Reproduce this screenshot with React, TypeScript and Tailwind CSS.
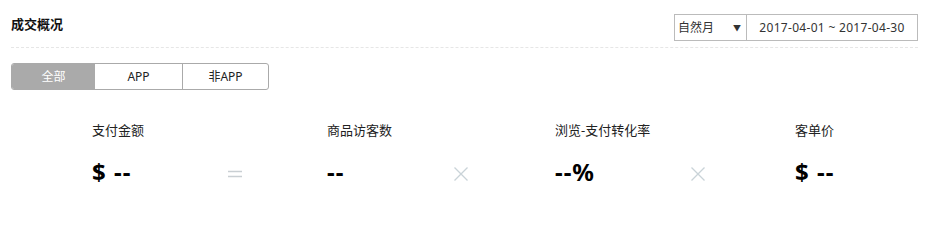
import React from 'react';

const tabs = ['全部', 'APP', '非APP'];

const metrics = [
    { label: '支付金额', value: '$ --', width: 'w-[136px]', op: '=', gap: 'mr-[85px]' },
    { label: '商品访客数', value: '--', width: 'w-[127px]', op: '×', gap: 'mr-[87px]' },
    { label: '浏览-支付转化率', value: '--%', width: 'w-[136px]', op: '×', gap: 'mr-[90px]' },
    { label: '客单价', value: '$ --', width: 'w-[120px]', op: '', gap: '' },
];

const Equals = () => (
    <svg width="14" height="14" viewBox="0 0 14 14" className="text-[#c9cfd3]">
        <path d="M0 4.5h14M0 9.5h14" stroke="currentColor" strokeWidth="1.6" />
    </svg>
);

const Times = () => (
    <svg width="14" height="14" viewBox="0 0 14 14" className="text-[#c9d3d8]">
        <path d="M0.5 0.5l13 13M13.5 0.5l-13 13" stroke="currentColor" strokeWidth="1.3" />
    </svg>
);

const App: React.FC = () => {
    return (
        <div className="w-[928px] h-[225px] bg-white pl-[11px] pr-[10px] text-[#333]" style={{ fontFamily: '"Noto Sans", "Noto Sans CJK SC", sans-serif' }}>
            {/* header */}
            <div className="flex justify-between items-start border-b border-dashed border-[#e6e6e6] pb-[6px]">
                <h2 className="mt-[14px] text-[13px] leading-[20px] font-bold text-[#111]">成交概况</h2>
                <div className="mt-[14px] flex h-[27px] border border-[#bbb] text-[12px]">
                    <div className="w-[72px] flex items-center justify-between pl-[3px] pr-[5px] border-r border-[#bbb]">
                        <span>自然月</span>
                        <span className="text-[8px] text-[#333]">▼</span>
                    </div>
                    <div className="w-[170px] flex items-center justify-center tracking-[0.3px]">2017-04-01 ~ 2017-04-30</div>
                </div>
            </div>

            {/* tabs */}
            <div className="mt-[15px] flex w-[258px] h-[27px] border border-[#aaa] rounded-[3px] overflow-hidden text-[12px]">
                {tabs.map((t, i) => (
                    <div
                        key={t}
                        className={
                            i === 0
                                ? 'w-[83px] flex items-center justify-center bg-[#aaa] text-white'
                                : i === 1
                                  ? 'w-[88px] flex items-center justify-center border-r border-[#aaa] text-[#222]'
                                  : 'flex-1 flex items-center justify-center text-[#222]'
                        }
                    >
                        {t}
                    </div>
                ))}
            </div>

            {/* metrics */}
            <div className="mt-[30px] flex pl-[81px]">
                {metrics.map((m) => (
                    <React.Fragment key={m.label}>
                        <div className={`${m.width} shrink-0`}>
                            <div className="text-[13px] leading-[20px] text-[#222]">{m.label}</div>
                            <div className="mt-[16px] text-[24px] leading-[32px] font-bold tracking-[1px] text-black">{m.value}</div>
                        </div>
                        {m.op && (
                            <div className={`${m.gap} shrink-0 w-[14px] flex items-start pt-[47px]`}>
                                {m.op === '=' ? <Equals /> : <Times />}
                            </div>
                        )}
                    </React.Fragment>
                ))}
            </div>
        </div>
    );
};

export default App;
